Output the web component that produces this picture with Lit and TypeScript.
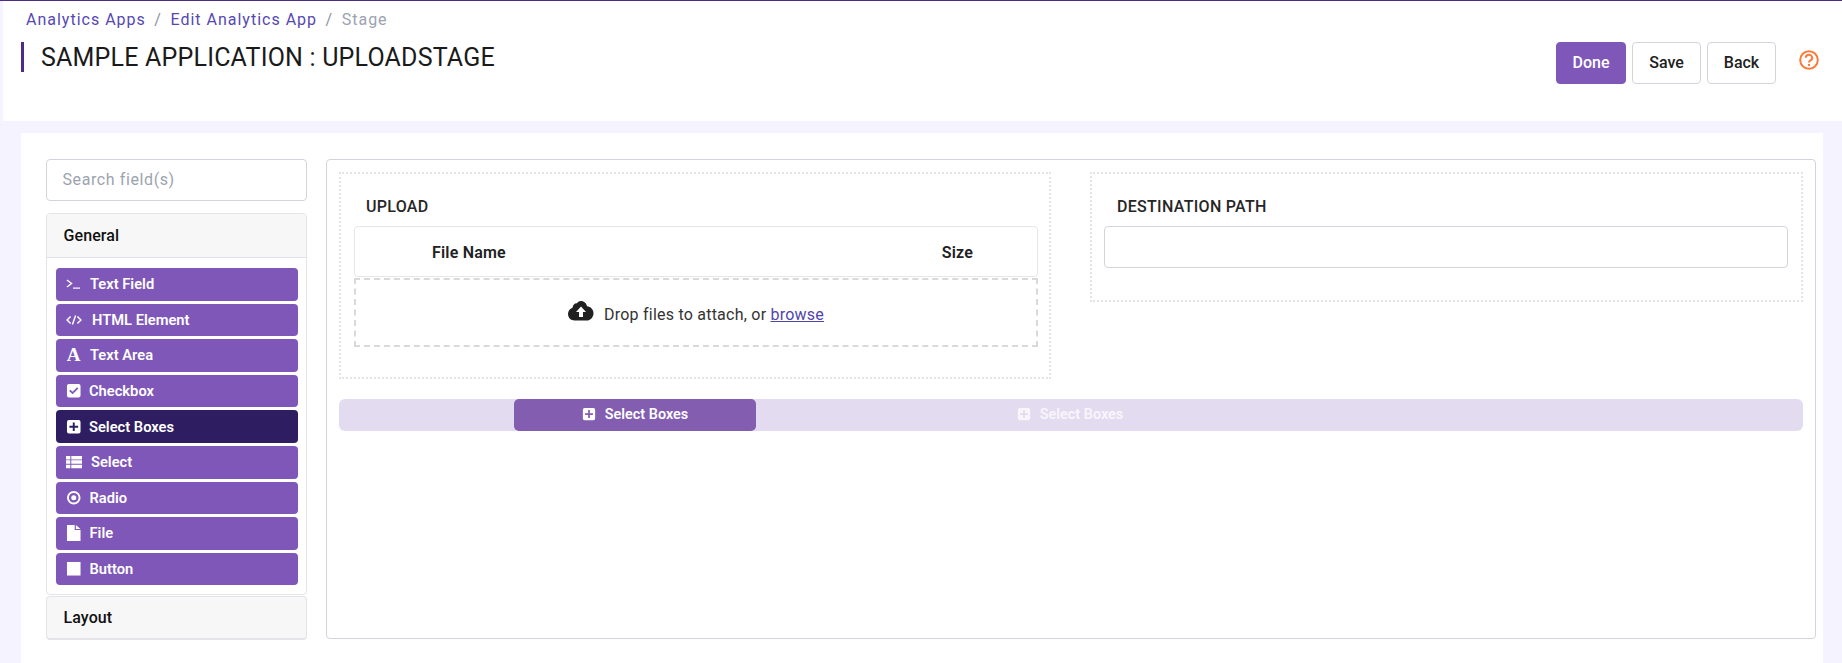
import { LitElement, html, css, svg } from "lit";
import { customElement } from "lit/decorators.js";

const icons: Record<string, { w: number; h: number; body: unknown }> = {
  terminal: {
    w: 15,
    h: 14,
    body: svg`<path d="M1 3.5 6 7.5 1 11.5" fill="none" stroke="currentColor" stroke-width="1.4"/><path d="M7.5 12.7H15" stroke="currentColor" stroke-width="1.4"/>`,
  },
  code: {
    w: 16,
    h: 14,
    body: svg`<path d="M4.6 4 1 8l3.6 4M11.4 4 15 8l-3.6 4M9.6 2.8 6.4 13.2" fill="none" stroke="currentColor" stroke-width="1.4"/>`,
  },
  check: {
    w: 15.500,
    h: 15.500,
    body: svg`<path fill-rule="evenodd" fill="currentColor" d="M3 1h10a2 2 0 0 1 2 2v10a2 2 0 0 1-2 2H3a2 2 0 0 1-2-2V3a2 2 0 0 1 2-2ZM3.300 8.200 6.800 11.700 12.800 5.700 11.500 4.400 6.800 9.100 4.600 6.900Z"/>`,
  },
  plus: {
    w: 15.500,
    h: 15.500,
    body: svg`<path fill-rule="evenodd" fill="currentColor" d="M3 1h10a2 2 0 0 1 2 2v10a2 2 0 0 1-2 2H3a2 2 0 0 1-2-2V3a2 2 0 0 1 2-2ZM7 3.500V7H3.500v2H7v3.500h2V9h3.500V7H9V3.500Z"/>`,
  },
  list: {
    w: 16,
    h: 14,
    body: svg`<path fill="currentColor" d="M0 1h4.300v4H0ZM5.300 1H16v4H5.300ZM0 6h4.300v4H0ZM5.300 6H16v4H5.300ZM0 11h4.300v4H0ZM5.300 11H16v4H5.300Z"/>`,
  },
  radio: {
    w: 15.500,
    h: 15.500,
    body: svg`<circle cx="8" cy="8" r="6" fill="none" stroke="currentColor" stroke-width="2"/><circle cx="8" cy="8" r="2.600" fill="currentColor"/>`,
  },
  file: {
    w: 15.500,
    h: 16,
    body: svg`<path fill="currentColor" d="M1 0h8v5h6v11H1ZM10.200 0 15 3.900H10.200Z"/>`,
  },
  stop: {
    w: 15.500,
    h: 15.500,
    body: svg`<rect x="1" y="1" width="14" height="14" fill="currentColor"/>`,
  },
};

const fields = [
  { label: "Text Field", icon: "terminal", gap: 9 },
  { label: "HTML Element", icon: "code", gap: 10 },
  { label: "Text Area", icon: "font", gap: 9 },
  { label: "Checkbox", icon: "check", gap: 7.500 },
  { label: "Select Boxes", icon: "plus", gap: 7.500, active: true },
  { label: "Select", icon: "list", gap: 9 },
  { label: "Radio", icon: "radio", gap: 8 },
  { label: "File", icon: "file", gap: 8 },
  { label: "Button", icon: "stop", gap: 8 },
];

function icon(name: string, size?: number) {
  const i = icons[name];
  return html`<svg class="ico" width=${size ?? i.w} height=${size ?? i.h} viewBox="0 0 16 16" preserveAspectRatio="none" aria-hidden="true">${i.body}</svg>`;
}

@customElement("app-root")
export class AppRoot extends LitElement {
  static styles = css`
    :host {
      display: block;
      height: 663px;
      overflow: hidden;
      box-sizing: border-box;
      background: #f5f3ff;
      border-top: 1px solid #4b2d83;
      font-family: Roboto, "Liberation Sans", sans-serif;
      color: #212121;
    }
    * {
      box-sizing: border-box;
    }
    .head {
      margin-left: 3px;
      height: 120px;
      background: #fff;
      display: flex;
      justify-content: space-between;
      padding-right: 23px;
    }
    .crumbs {
      padding: 10px 0 0 23px;
      height: 41px;
      font-size: 16px;
      line-height: 18px;
      letter-spacing: 1px;
      color: #5548b3;
    }
    .crumbs .sep {
      color: #8d93a0;
      padding: 0 8.500px;
    }
    .crumbs .now {
      color: #9ca3af;
    }
    .title {
      margin: 0 0 0 18px;
      border-left: 3px solid #4b2d83;
      padding: 2px 0 0 17px;
      height: 30px;
      font-size: 25px;
      font-weight: 400;
      line-height: 28px;
      letter-spacing: 0.2px;
      color: #1a1a1a;
    }
    .actions {
      display: flex;
      align-items: flex-start;
      padding-top: 41px;
    }
    .btn {
      height: 42px;
      width: 69px;
      margin-right: 6px;
      padding: 0 0 2px;
      border: 1px solid #d1d5db;
      border-radius: 4px;
      background: #fff;
      font: 500 16px Roboto, sans-serif;
      color: #212121;
    }
    .btn.primary {
      width: 70px;
      background: #7e57b9;
      border-color: #7e57b9;
      color: #fff;
    }
    .help {
      margin: 8px 0 0 17px;
      color: #f97b3c;
    }
    .panel {
      margin: 12px 19px 0 21px;
      height: 530px;
      padding: 26px 7px 0 25px;
      background: #fff;
      display: grid;
      grid-template-columns: 261px 1fr;
      column-gap: 19px;
      align-items: start;
    }
    .search {
      display: block;
      width: 100%;
      height: 42px;
      padding: 0 15.500px 2px;
      border: 1px solid #d1d5db;
      border-radius: 4px;
      font: 400 16px Roboto, sans-serif;
      letter-spacing: 0.6px;
      outline: none;
    }
    .search::placeholder {
      color: #9ca3af;
    }
    .group {
      margin-top: 12px;
      border: 1px solid #e2e4e8;
      border-radius: 4px;
      padding-bottom: 8px;
    }
    .group-title {
      height: 44px;
      padding: 0 16.500px;
      display: flex;
      align-items: center;
      background: #f7f7f7;
      border-bottom: 1px solid #dee2e6;
      border-radius: 4px 4px 0 0;
      font-size: 16px;
      font-weight: 500;
      letter-spacing: 0.1px;
      color: #111;
    }
    .fields {
      padding: 10px 8px 0 9px;
    }
    .field {
      height: 32.600px;
      margin-bottom: 3px;
      padding-left: 10px;
      display: flex;
      align-items: center;
      background: #7e57b9;
      border-radius: 4px;
      color: #fff;
      font-size: 14.700px;
      font-weight: 600;
    }
    .field:last-child {
      margin-bottom: 1px;
    }
    .field.active {
      background: #2e1d60;
    }
    .ico {
      flex: none;
      display: block;
    }
    .serif {
      flex: none;
      width: 15px;
      text-align: center;
      font: 700 19px "Liberation Serif", serif;
    }
    .layout {
      margin-top: 1px;
      height: 44px;
      padding: 0 16.500px;
      display: flex;
      align-items: center;
      background: #f7f7f7;
      border: 1px solid #e2e4e8;
      border-bottom-width: 2px;
      border-radius: 4px;
      font-size: 16px;
      font-weight: 500;
      letter-spacing: 0.1px;
      color: #111;
    }
    .canvas {
      height: 480px;
      padding: 12px;
      border: 1px solid #d1d5db;
      border-radius: 4px;
    }
    .cols {
      display: grid;
      grid-template-columns: 712px 713px;
      column-gap: 39px;
      align-items: start;
    }
    .box {
      border: 2px dotted #e4e4e4;
    }
    .upload {
      height: 207px;
      padding: 0 11px 0 13px;
    }
    .dest {
      height: 130px;
      padding: 0 13px 0 12px;
    }
    .label {
      height: 52px;
      padding: 23px 0 0 12px;
      font-size: 16px;
      line-height: 20px;
      font-weight: 500;
      letter-spacing: 0.3px;
      color: #262626;
    }
    .dest .label {
      padding-left: 13px;
    }
    .table {
      height: 51px;
      padding: 1px 64px 0 77px;
      border: 1px solid #e5e7eb;
      border-radius: 4px;
      display: flex;
      align-items: center;
      justify-content: space-between;
      font-size: 16px;
      font-weight: 600;
      letter-spacing: 0.2px;
    }
    .drop {
      margin-top: 1px;
      height: 69px;
      padding-top: 3px;
      border: 2px dashed #d9d9d9;
      display: flex;
      align-items: center;
      justify-content: center;
      gap: 10px;
      font-size: 16px;
      letter-spacing: 0.23px;
      color: #333;
    }
    .drop a {
      color: #4f46ab;
      text-decoration: underline;
    }
    .cloud {
      margin-top: -5px;
      color: #212121;
    }
    .path {
      display: block;
      width: 100%;
      height: 42px;
      border: 1px solid #d1d5db;
      border-radius: 4px;
      outline: none;
      background: #fff;
    }
    .bar {
      margin-top: 20px;
      height: 32px;
      padding-left: 175px;
      display: flex;
      gap: 193px;
      background: #e3dcf1;
      border-radius: 6px;
    }
    .piece {
      width: 242px;
      padding-bottom: 2px;
      display: flex;
      align-items: center;
      justify-content: center;
      gap: 9px;
      border-radius: 5px;
      color: #fff;
      font-size: 14.400px;
      font-weight: 600;
    }
    .piece.solid {
      background: #835db0;
    }
    .piece.ghost {
      opacity: 0.75;
    }
  `;

  renderField(f: (typeof fields)[number]) {
    return html`<div class="field ${f.active ? "active" : ""}">
      ${f.icon === "font" ? html`<span class="serif">A</span>` : icon(f.icon)}
      <span style="margin-left:${f.gap}px">${f.label}</span>
    </div>`;
  }

  render() {
    return html`
      <header class="head">
        <div>
          <div class="crumbs">
            Analytics Apps<span class="sep">/</span>Edit Analytics App<span class="sep">/</span><span class="now">Stage</span>
          </div>
          <h1 class="title">SAMPLE APPLICATION : UPLOADSTAGE</h1>
        </div>
        <div class="actions">
          <button class="btn primary">Done</button>
          <button class="btn">Save</button>
          <button class="btn">Back</button>
          <svg class="help" width="20" height="20" viewBox="0 0 20 20" fill="none" stroke="currentColor" stroke-width="2">
            <circle cx="10" cy="10" r="8.800"/>
            <path d="M6.800 7.800a3.200 3 0 1 1 4.700 2.600c-1 .6-1.500 1-1.500 2.100"/>
            <path d="M10 14v2"/>
          </svg>
        </div>
      </header>
      <section class="panel">
        <aside>
          <input class="search" placeholder="Search field(s)" />
          <div class="group">
            <div class="group-title">General</div>
            <div class="fields">${fields.map((f) => this.renderField(f))}</div>
          </div>
          <div class="layout">Layout</div>
        </aside>
        <main class="canvas">
          <div class="cols">
            <div class="box upload">
              <div class="label">UPLOAD</div>
              <div class="table"><span>File Name</span><span>Size</span></div>
              <div class="drop">
                <svg class="cloud" width="26" height="21" viewBox="0 0 26 21">
                  <path fill="currentColor" d="M13 0c3 0 5.500 2.300 6 5.200 3.600.2 6.500 3.200 6.500 7 0 4-3 7.300-7 7.300H6.500C3 19.500 0 16.700 0 13c0-2.900 1.800-5.300 4.500-6.200C5 3.500 7 2 9 2.300 10 .8 11.300 0 13 0Z"/>
                  <path fill="#fff" d="M13 5.500 18 11h-3v5h-4v-5H8Z"/>
                </svg>
                <span>Drop files to attach, or <a href="#">browse</a></span>
              </div>
            </div>
            <div class="box dest">
              <div class="label">DESTINATION PATH</div>
              <input class="path" />
            </div>
          </div>
          <div class="bar">
            <div class="piece solid">${icon("plus", 14)}<span>Select Boxes</span></div>
            <div class="piece ghost">${icon("plus", 14)}<span>Select Boxes</span></div>
          </div>
        </main>
      </section>
    `;
  }
}
